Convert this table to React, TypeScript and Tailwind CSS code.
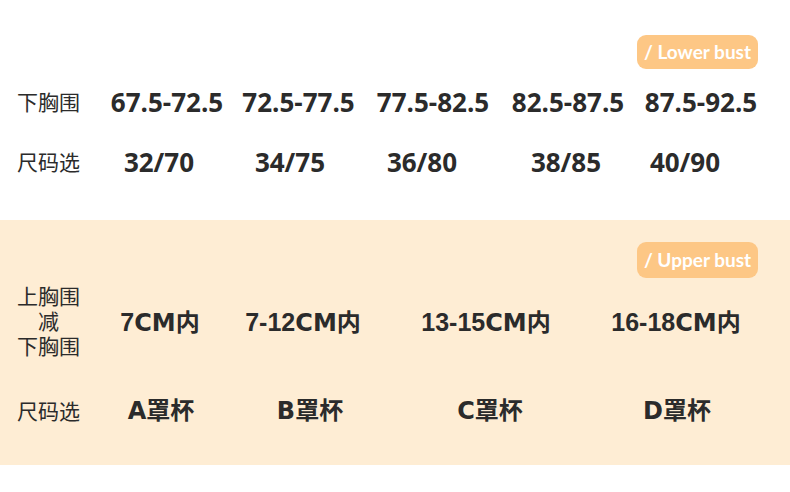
import React from "react";

function Cell({ w, children }: { w: number; children: React.ReactNode }) {
  return (
    <div className="flex justify-center whitespace-nowrap" style={{ width: w }}>
      {children}
    </div>
  );
}

function Geo({ text }: { text: string }) {
  const parts = text.split(/([0-9\-]+)/).filter(Boolean);
  return (
    <span className="text-[24px] font-bold font-['DejaVu_Sans','Noto_Sans_CJK_SC',sans-serif]">
      {parts.map((p, i) =>
        /^[0-9\-]+$/.test(p) ? (
          <span key={i} className="text-[25px] font-['Liberation_Sans',sans-serif]">
            {p}
          </span>
        ) : (
          <span key={i}>{p}</span>
        )
      )}
    </span>
  );
}

function Label({ children }: { children: React.ReactNode }) {
  return (
    <div className="w-[102px] pl-[17px] text-[21px] font-['Noto_Sans_CJK_SC',sans-serif]">{children}</div>
  );
}

function Badge({ text, h }: { text: string; h: string }) {
  return (
    <div className="flex justify-end pr-[32px]">
      <div
        className={`${h} w-[121px] rounded-[9px] bg-[#fdc785] text-white text-[19px] font-bold flex items-center justify-center font-['Lato',sans-serif]`}
      >
        {text}
      </div>
    </div>
  );
}

export default function App() {
  const r1 = ["67.5-72.5", "72.5-77.5", "77.5-82.5", "82.5-87.5", "87.5-92.5"];
  const w1 = [130, 133, 136, 134, 132];
  const r2 = ["32/70", "34/75", "36/80", "38/85", "40/90"];
  const w2 = [114, 148, 116, 172, 66];
  const r3 = ["7CM内", "7-12CM内", "13-15CM内", "16-18CM内"];
  const w3 = [116, 170, 196, 184];
  const r4 = ["A罩杯", "B罩杯", "C罩杯", "D罩杯"];
  const w4 = [118, 180, 180, 194];

  return (
    <div className="w-[790px] h-[492px] bg-white text-[#2b2b2b] overflow-hidden">
      <section className="h-[220px] pt-[35px]">
        <Badge text="/ Lower bust" h="h-[34px]" />
        <div className="mt-[13px] h-[40px] flex items-center">
          <Label>下胸围</Label>
          {r1.map((t, i) => (
            <Cell key={t} w={w1[i]}>
              <span className="text-[26px] font-bold font-['Open_Sans',sans-serif]">{t}</span>
            </Cell>
          ))}
        </div>
        <div className="mt-[20px] h-[40px] flex items-center">
          <Label>尺码选</Label>
          {r2.map((t, i) => (
            <Cell key={t} w={w2[i]}>
              <span className="text-[26px] font-bold font-['Open_Sans',sans-serif]">{t}</span>
            </Cell>
          ))}
        </div>
      </section>
      <section className="h-[245px] bg-[#feedd4] pt-[22px]">
        <Badge text="/ Upper bust" h="h-[36px]" />
        <div className="mt-[7px] h-[76px] flex items-center">
          <div className="w-[102px] pl-[17px] -mt-[6px] font-['Noto_Sans_CJK_SC',sans-serif]">
            <div className="w-[63px] flex flex-col items-center text-[21px]">
              <div className="h-[25px] leading-[25px]">上胸围</div>
              <div className="h-[25px] leading-[25px]">减</div>
              <div className="h-[25px] leading-[25px]">下胸围</div>
            </div>
          </div>
          {r3.map((t, i) => (
            <Cell key={t} w={w3[i]}>
              <Geo text={t} />
            </Cell>
          ))}
        </div>
        <div className="mt-[30px] h-[40px] flex items-center">
          <Label>尺码选</Label>
          {r4.map((t, i) => (
            <Cell key={t} w={w4[i]}>
              <Geo text={t} />
            </Cell>
          ))}
        </div>
      </section>
    </div>
  );
}
